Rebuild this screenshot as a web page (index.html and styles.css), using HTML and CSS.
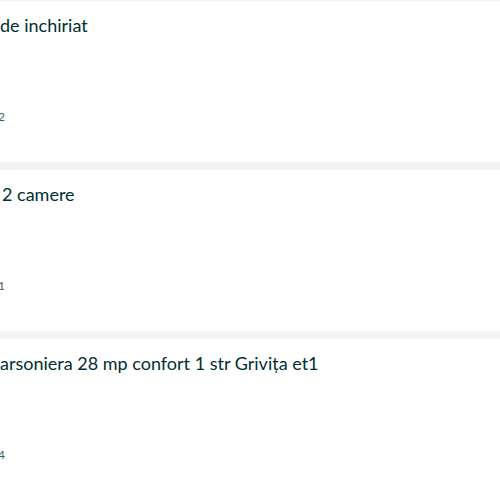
FILE: index.html
```html
<!DOCTYPE html>
<html lang="ro">

<head>
    <meta charset="UTF-8">
    <meta name="viewport" content="width=device-width, initial-scale=1.0">
    <title>Anunturi</title>
    <link rel="stylesheet" href="styles.css">
</head>

<body>
    <ul class="listings">
        <li class="card">
            <h6 class="card-title">de inchiriat</h6>
            <p class="card-date">2</p>
        </li>
        <li class="card">
            <h6 class="card-title card-title-shift">2 camere</h6>
            <p class="card-date">1</p>
        </li>
        <li class="card">
            <h6 class="card-title">arsoniera 28 mp confort 1 str Grivița et1</h6>
            <p class="card-date">4</p>
        </li>
    </ul>
</body>

</html>
```

FILE: styles.css
```css
body {
    margin: 0;
    background-color: #f2f4f5;
    font-family: "Lato", "Liberation Sans", sans-serif;
    color: #002f34;
    overflow: hidden;
}

.listings {
    list-style: none;
    margin: 0;
    padding: 1px 0 0;
    display: flex;
    flex-direction: column;
    gap: 8px;
}

.card {
    background-color: #fff;
    height: 161px;
    padding: 13px 0 0;
    box-sizing: border-box;
}

.card-title {
    margin: 0;
    font-size: 18px;
    font-weight: 400;
    line-height: 22px;
}

.card-title-shift {
    padding-left: 2px;
}

.card-date {
    margin: 73px 0 0 -2px;
    font-size: 12px;
    line-height: 15px;
    color: #406367;
}
```
